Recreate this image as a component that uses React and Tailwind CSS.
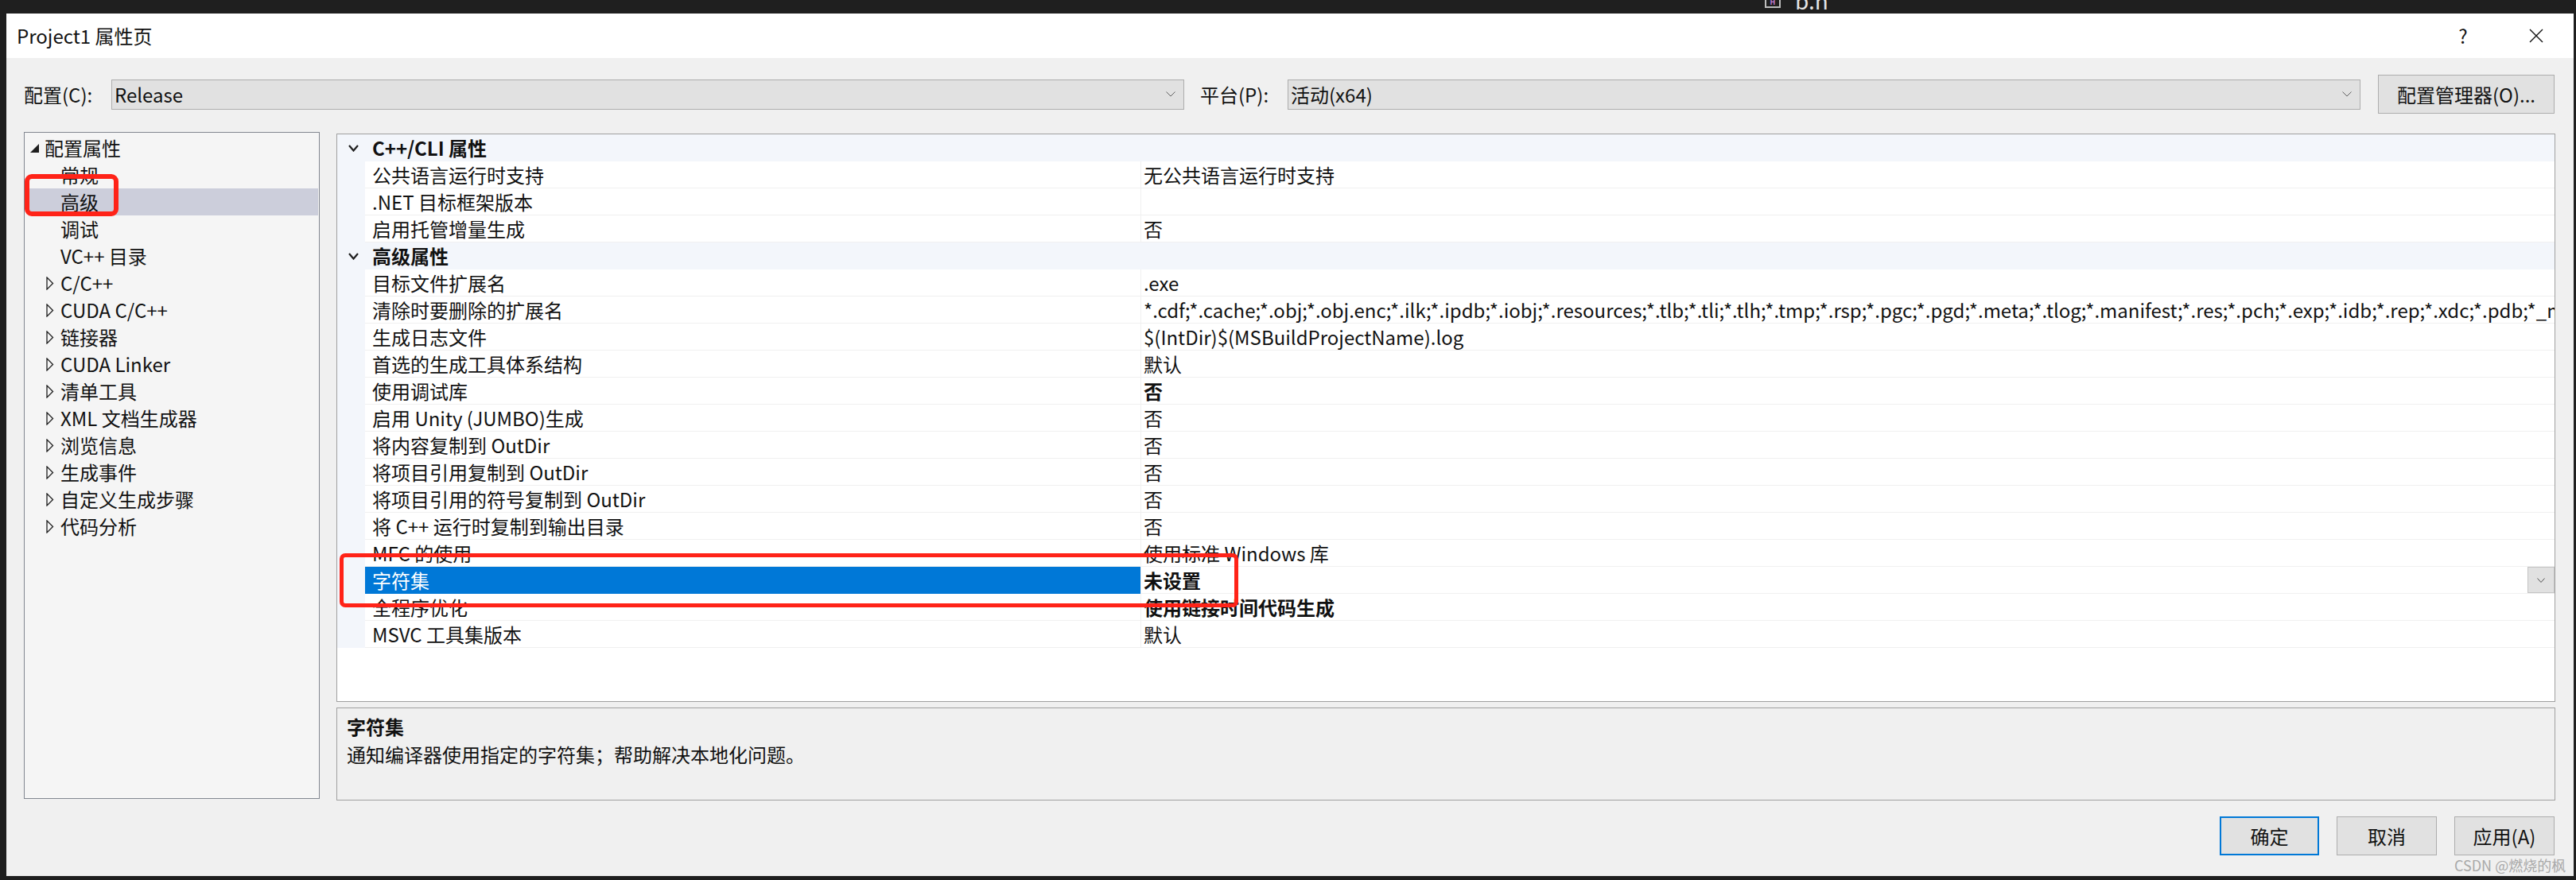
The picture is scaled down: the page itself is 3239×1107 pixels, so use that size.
import React from 'react';

const treeTop = ['常规', '高级', '调试', 'VC++ 目录'];
const treeSub = ['C/C++', 'CUDA C/C++', '链接器', 'CUDA Linker', '清单工具', 'XML 文档生成器', '浏览信息', '生成事件', '自定义生成步骤', '代码分析'];

const longExt = '*.cdf;*.cache;*.obj;*.obj.enc;*.ilk;*.ipdb;*.iobj;*.resources;*.tlb;*.tli;*.tlh;*.tmp;*.rsp;*.pgc;*.pgd;*.meta;*.tlog;*.manifest;*.res;*.pch;*.exp;*.idb;*.rep;*.xdc;*.pdb;*_manifest.rc;*.bsc;*.sbr;*.xml;*.metagen;*.bi';

const sections = [
  {
    title: 'C++/CLI 属性',
    rows: [
      ['公共语言运行时支持', '无公共语言运行时支持'],
      ['.NET 目标框架版本', ''],
      ['启用托管增量生成', '否'],
    ],
  },
  {
    title: '高级属性',
    rows: [
      ['目标文件扩展名', '.exe'],
      ['清除时要删除的扩展名', longExt],
      ['生成日志文件', '$(IntDir)$(MSBuildProjectName).log'],
      ['首选的生成工具体系结构', '默认'],
      ['使用调试库', '否', true],
      ['启用 Unity (JUMBO)生成', '否'],
      ['将内容复制到 OutDir', '否'],
      ['将项目引用复制到 OutDir', '否'],
      ['将项目引用的符号复制到 OutDir', '否'],
      ['将 C++ 运行时复制到输出目录', '否'],
      ['MFC 的使用', '使用标准 Windows 库'],
      ['字符集', '未设置', true, true],
      ['全程序优化', '使用链接时间代码生成', true],
      ['MSVC 工具集版本', '默认'],
    ],
  },
];

function ComboChevron() {
  return (
    <svg width="12" height="7" viewBox="0 0 12 7">
      <path d="M0.5 0.5 L6 6 L11.5 0.5" stroke="#606060" strokeWidth="1" fill="none" />
    </svg>
  );
}

function Combo({ text }) {
  return (
    <div className="w-[1349px] h-[38px] shrink-0 bg-[#e1e1e1] border border-[#adadad] flex items-center pl-[3px] pr-[10px]">
      <span className="flex-1">{text}</span>
      <ComboChevron />
    </div>
  );
}

function SubTri() {
  return (
    <svg width="10" height="17" viewBox="0 0 10 17">
      <path d="M1 1 L8.5 8.5 L1 16 Z" fill="none" stroke="#1e1e1e" strokeWidth="1.3" strokeLinejoin="miter" />
    </svg>
  );
}

function PropRow({ name, value, bold, selected }) {
  return (
    <div className="flex h-[34px] shrink-0">
      <div className="w-[35px] shrink-0 bg-[#f3f6fb]" />
      <div
        className={
          selected
            ? 'w-[975px] shrink-0 flex items-center pl-[9px] bg-[#0078d7] text-white whitespace-nowrap'
            : 'w-[975px] shrink-0 flex items-center pl-[9px] border-b border-[#f0f0f0] whitespace-nowrap'
        }
      >
        {name}
      </div>
      <div className="flex-1 min-w-0 flex items-center border-l border-b border-[#f0f0f0] overflow-hidden">
        <span className={bold ? 'pl-[3px] font-bold whitespace-nowrap flex-1' : 'pl-[3px] whitespace-nowrap flex-1'}>{value}</span>
        {selected && (
          <div className="w-[34px] h-[33px] shrink-0 bg-[#e1e1e1] border border-[#c4c4c4] flex items-center justify-center">
            <svg width="10" height="6" viewBox="0 0 10 6">
              <path d="M0.5 0.5 L5 5.5 L9.5 0.5" stroke="#505050" strokeWidth="1" fill="none" />
            </svg>
          </div>
        )}
      </div>
    </div>
  );
}

function CategoryRow({ title }) {
  return (
    <div className="flex items-center h-[34px] shrink-0 bg-[#f3f6fb]">
      <div className="w-[44px] shrink-0 pl-[14px] flex items-center">
        <svg width="13" height="9" viewBox="0 0 13 9">
          <path d="M1 1 L6.5 7.5 L12 1" fill="none" stroke="#1e1e1e" strokeWidth="2.2" />
        </svg>
      </div>
      <span className="font-bold">{title}</span>
    </div>
  );
}

export default function App() {
  return (
    <div className="relative w-[3239px] h-[1107px] bg-[#1f1f1f] overflow-hidden flex flex-col font-['Noto_Sans_CJK_SC',sans-serif] text-[24px] text-[#111]">
      {/* background window strip */}
      <div className="h-[17px] shrink-0 overflow-hidden flex items-start pl-[2219px] gap-[18px]">
        <div className="w-[20px] h-[20px] -mt-[10px] border-2 border-[#bdbdbd] flex items-end justify-center">
          <span className="text-[9px] leading-none text-[#c27ad6] font-bold pb-[1px]">H</span>
        </div>
        <span className="text-[#e6e6e6] text-[28px] leading-none -mt-[14px]">b.h</span>
      </div>

      {/* dialog */}
      <div className="flex-1 flex flex-col ml-[8px] mr-[3px] mb-[5px] bg-[#f0f0f0]">
        {/* title bar */}
        <div className="h-[56px] shrink-0 bg-white flex items-center pl-[13px]">
          <span className="flex-1">Project1 属性页</span>
          <div className="w-[92px] flex justify-center text-[24px]">?</div>
          <div className="w-[92px] flex justify-center mr-[1px]">
            <svg width="18" height="18" viewBox="0 0 18 18">
              <path d="M1 1 L17 17 M17 1 L1 17" stroke="#111" strokeWidth="1.4" />
            </svg>
          </div>
        </div>

        {/* body */}
        <div className="flex-1 flex flex-col pl-[22px] pr-[23px]">
          {/* configuration row */}
          <div className="mt-[21px] h-[49px] flex items-center shrink-0">
            <span className="w-[110px] shrink-0">配置(C):</span>
            <Combo text="Release" />
            <span className="ml-[20px] w-[110px] shrink-0">平台(P):</span>
            <Combo text="活动(x64)" />
            <div className="ml-[22px] w-[222px] h-[49px] shrink-0 bg-[#e1e1e1] border border-[#adadad] flex items-center justify-center">
              配置管理器(O)...
            </div>
          </div>

          {/* main */}
          <div className="mt-[23px] flex gap-[21px] shrink-0">
            {/* tree */}
            <div className="w-[372px] h-[839px] shrink-0 bg-[#f5f5f5] border border-[#828790] pt-[2px] pl-[6px] pr-[1px] flex flex-col">
              <div className="h-[34px] flex items-center">
                <div className="w-[19px] shrink-0 pl-[1px] flex items-center">
                  <svg width="11" height="11" viewBox="0 0 11 11">
                    <path d="M11 0 L11 11 L0 11 Z" fill="#1e1e1e" />
                  </svg>
                </div>
                <span>配置属性</span>
              </div>
              {treeTop.map((t) => (
                <div
                  key={t}
                  className={t === '高级' ? 'h-[34px] flex items-center bg-[#cccedb]' : 'h-[34px] flex items-center'}
                >
                  <div className="w-[39px] shrink-0" />
                  <span>{t}</span>
                </div>
              ))}
              {treeSub.map((t) => (
                <div key={t} className="h-[34px] flex items-center">
                  <div className="w-[39px] shrink-0 pl-[21px] flex items-center">
                    <SubTri />
                  </div>
                  <span>{t}</span>
                </div>
              ))}
            </div>

            {/* right column */}
            <div className="flex-1 min-w-0 flex flex-col">
              <div className="mt-[2px] h-[715px] bg-white border border-[#a0a0a0] flex flex-col overflow-hidden">
                {sections.map((s) => (
                  <React.Fragment key={s.title}>
                    <CategoryRow title={s.title} />
                    {s.rows.map((r) => (
                      <PropRow key={r[0]} name={r[0]} value={r[1]} bold={r[2]} selected={r[3]} />
                    ))}
                  </React.Fragment>
                ))}
              </div>
              <div className="mt-[7px] h-[117px] bg-[#f0f0f0] border border-[#a0a0a0] pl-[12px] pt-[5px] flex flex-col">
                <div className="h-[35px] flex items-center font-bold">字符集</div>
                <div className="h-[35px] flex items-center">通知编译器使用指定的字符集；帮助解决本地化问题。</div>
              </div>
            </div>
          </div>

          {/* buttons */}
          <div className="mt-[20px] flex justify-end gap-[22px] pr-[1px] shrink-0">
            <div className="w-[125px] h-[49px] bg-[#e1e1e1] border-2 border-[#0078d7] flex items-center justify-center">确定</div>
            <div className="w-[126px] h-[49px] bg-[#e1e1e1] border border-[#adadad] flex items-center justify-center">取消</div>
            <div className="w-[126px] h-[49px] bg-[#e1e1e1] border border-[#adadad] flex items-center justify-center">应用(A)</div>
          </div>
        </div>
      </div>

      {/* annotation overlays */}
      <div className="absolute left-[31px] top-[219px] w-[118px] h-[53px] border-[6px] border-[#ff2318] rounded-[9px]" />
      <div className="absolute left-[427px] top-[696px] w-[1130px] h-[68px] border-[5px] border-[#ff2318] rounded-[7px]" />

      {/* watermark */}
      <div className="absolute left-[3086px] top-[1076px] text-[18px] leading-[24px] text-[#a9a9a9] whitespace-nowrap">
        CSDN @燃烧的枫
      </div>
    </div>
  );
}
